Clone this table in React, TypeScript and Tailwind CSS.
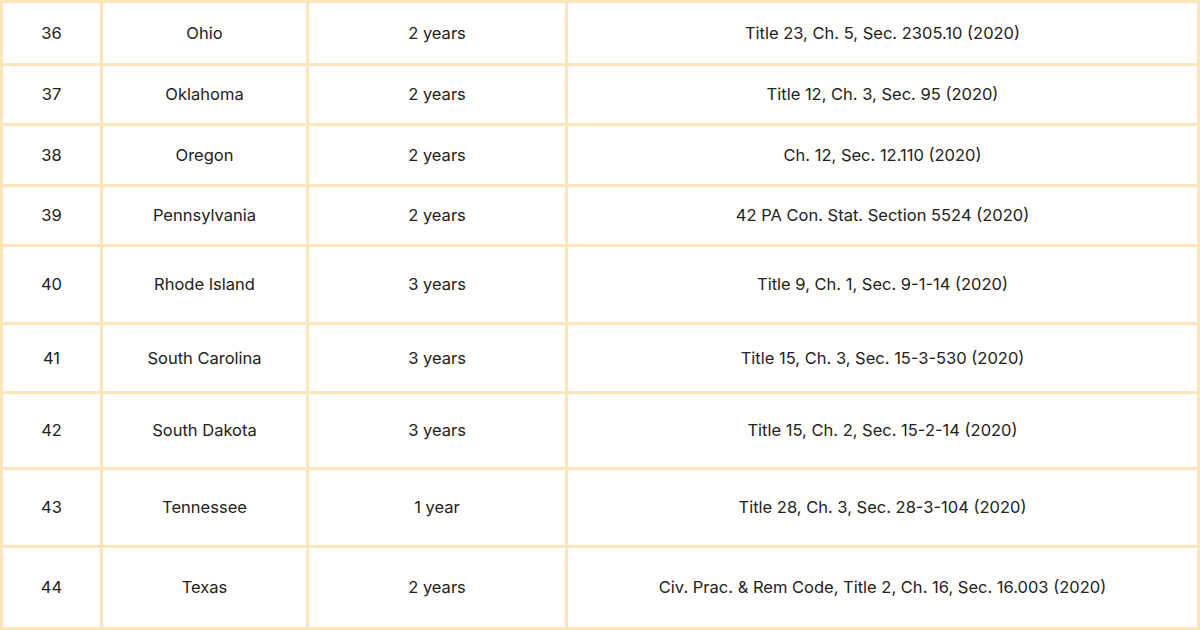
import React from 'react';

const rows = [
  { n: '36', state: 'Ohio', term: '2 years', code: 'Title 23, Ch. 5, Sec. 2305.10 (2020)', h: 'h-[63px]' },
  { n: '37', state: 'Oklahoma', term: '2 years', code: 'Title 12, Ch. 3, Sec. 95 (2020)', h: 'h-[60px]' },
  { n: '38', state: 'Oregon', term: '2 years', code: 'Ch. 12, Sec. 12.110 (2020)', h: 'h-[61px]' },
  { n: '39', state: 'Pennsylvania', term: '2 years', code: '42 PA Con. Stat. Section 5524 (2020)', h: 'h-[60px]' },
  { n: '40', state: 'Rhode Island', term: '3 years', code: 'Title 9, Ch. 1, Sec. 9-1-14 (2020)', h: 'h-[78px]' },
  { n: '41', state: 'South Carolina', term: '3 years', code: 'Title 15, Ch. 3, Sec. 15-3-530 (2020)', h: 'h-[69px]' },
  { n: '42', state: 'South Dakota', term: '3 years', code: 'Title 15, Ch. 2, Sec. 15-2-14 (2020)', h: 'h-[76px]' },
  { n: '43', state: 'Tennessee', term: '1 year', code: 'Title 28, Ch. 3, Sec. 28-3-104 (2020)', h: 'h-[78px]' },
  { n: '44', state: 'Texas', term: '2 years', code: 'Civ. Prac. & Rem Code, Title 2, Ch. 16, Sec. 16.003 (2020)', h: 'h-[82px]' },
];

const cell = 'border-r-[3px] border-b-[3px] border-[#fce4bb] text-center align-middle p-0';

export default function App() {
  return (
    <div className="w-[1200px] h-[630px] overflow-hidden bg-white">
      <table
        className="w-[1200px] table-fixed border-separate border-spacing-0 border-l-[3px] border-t-[3px] border-[#fce4bb] bg-[#fffefc] text-[16.5px] text-[#222]"
        style={{ fontFamily: 'Inter, "Open Sans", sans-serif' }}
      >
        <colgroup>
          <col className="w-[100px]" />
          <col className="w-[206px]" />
          <col className="w-[259px]" />
          <col className="w-[632px]" />
        </colgroup>
        <tbody>
          {rows.map((r) => (
            <tr key={r.n} className={r.h}>
              <td className={cell}>{r.n}</td>
              <td className={cell}>{r.state}</td>
              <td className={cell}>{r.term}</td>
              <td className={cell}>{r.code}</td>
            </tr>
          ))}
        </tbody>
      </table>
    </div>
  );
}
